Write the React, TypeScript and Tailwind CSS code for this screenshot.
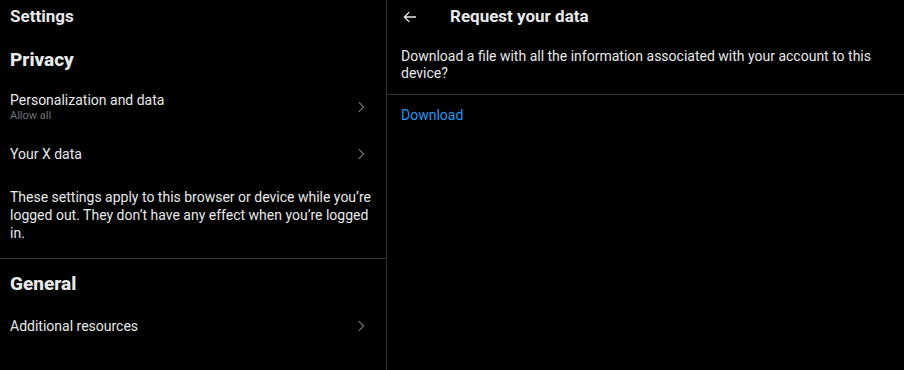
import React from "react";

function Chevron() {
  return (
    <svg width="18" height="18" viewBox="0 0 24 24" className="text-[#71767b]" fill="none" stroke="currentColor" strokeWidth="1.6">
      <path d="M9 5.5l6.5 6.5L9 18.5" />
    </svg>
  );
}

export default function App() {
  return (
    <div className="w-[904px] h-[370px] bg-black text-[#e7e9ea] flex" style={{ fontFamily: "Roboto, 'Liberation Sans', sans-serif" }}>
      <div className="w-[387px] border-r border-[#2f3336] flex flex-col">
        <div className="h-[33px] px-[10px] flex items-center text-[17px] font-bold">Settings</div>
        <div className="h-[54px] px-[10px] flex items-center text-[19px] font-extrabold">Privacy</div>
        <div className="h-[40px] pl-[10px] pr-[16px] flex items-center justify-between">
          <div className="flex flex-col">
            <span className="text-[14px] leading-[17px]">Personalization and data</span>
            <span className="text-[11px] leading-[13px] text-[#71767b]">Allow all</span>
          </div>
          <Chevron />
        </div>
        <div className="h-[54px] pl-[10px] pr-[16px] flex items-center justify-between">
          <span className="text-[14px]">Your X data</span>
          <Chevron />
        </div>
        <div className="px-[10px] pt-[7px] text-[14px] leading-[18px]">
          These settings apply to this browser or device while you’re logged out. They don’t have any effect when you’re logged in.
        </div>
        <div className="mt-[16px] border-t border-[#2f3336]" />
        <div className="h-[50px] px-[10px] flex items-center text-[19px] font-extrabold">General</div>
        <div className="h-[34px] pl-[10px] pr-[16px] flex items-center justify-between">
          <span className="text-[14px]">Additional resources</span>
          <Chevron />
        </div>
      </div>
      <div className="flex-1 flex flex-col">
        <div className="h-[33px] px-[14px] flex items-center gap-[22px]">
          <svg width="18" height="18" viewBox="0 0 24 24" fill="none" stroke="currentColor" strokeWidth="1.8">
            <path d="M20 12H5M11 5.5L4.5 12 11 18.5" />
          </svg>
          <span className="text-[17px] font-bold ml-[9px]">Request your data</span>
        </div>
        <div className="px-[14px] pt-[15px] pb-[12px] text-[14px] leading-[17px] border-b border-[#2f3336]">
          Download a file with all the information associated with your account to this device?
        </div>
        <div className="px-[14px] pt-[10px] text-[14px] text-[#1d9bf0]">Download</div>
      </div>
    </div>
  );
}
